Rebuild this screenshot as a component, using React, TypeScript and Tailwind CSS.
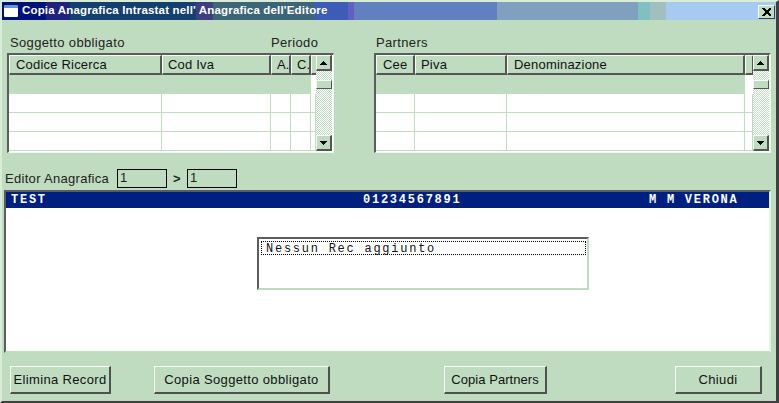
import React from "react";

const sans = "font-['Liberation_Sans',Arial,sans-serif]";
const mono = "font-['Liberation_Mono','Courier_New',monospace]";

const bands: [string, string][] = [
  ["w-[44px]", "bg-[#00107a]"],
  ["w-[24px]", "bg-[#20207e]"],
  ["w-[126px]", "bg-[#14406f]"],
  ["w-[17px]", "bg-[#3c3f80]"],
  ["w-[101px]", "bg-[#3c6678]"],
  ["w-[34px]", "bg-[#3c5cb8]"],
  ["w-[6px]", "bg-[#6060c0]"],
  ["w-[143px]", "bg-[#6080c0]"],
  ["w-[141px]", "bg-[#80a0c0]"],
  ["w-[12px]", "bg-[#80c0c0]"],
  ["w-[16px]", "bg-[#a0c0c0]"],
  ["flex-1", "bg-[#a6caf0]"],
];

function Triangle({ down }: { down?: boolean }) {
  return (
    <svg width="7" height="4" viewBox="0 0 7 4" shapeRendering="crispEdges">
      <path d={down ? "M0 0h7v1h-1v1h-1v1h-1v1h-1v-1h-1v-1h-1v-1h-1z" : "M3 0h1v1h1v1h1v1h1v1h-7v-1h1v-1h1v-1h1z"} fill="#000" />
    </svg>
  );
}

function ScrollButton({ down }: { down?: boolean }) {
  return (
    <div className="h-[16px] w-[16px] shrink-0 flex items-center justify-center bg-[#c0dcc0] border-t border-l border-t-[#f4faf4] border-l-[#f4faf4] border-r-2 border-b-2 border-r-[#555] border-b-[#555]">
      <Triangle down={down} />
    </div>
  );
}

function Scrollbar() {
  return (
    <div className="w-[16px] shrink-0 h-[96px] flex flex-col bg-[repeating-conic-gradient(#c0dcc0_0_25%,#ffffff_0_50%)] bg-[length:2px_2px]">
      <ScrollButton />
      <div className="mt-[9px] h-[9px] shrink-0 bg-[#c0dcc0] border-t border-l border-t-[#f4faf4] border-l-[#f4faf4] border-r border-b border-r-[#555] border-b-[#555]" />
      <div className="flex-1" />
      <ScrollButton down />
    </div>
  );
}

function HeaderCell({ w, label, pad = "pl-[6px]" }: { w: string; label: string; pad?: string }) {
  return (
    <div className={`${w} ${pad} shrink-0 h-[20px] box-border bg-[#c0dcc0] border-t border-l border-t-[#f4faf4] border-l-[#f4faf4] border-r-2 border-b-2 border-r-[#555] border-b-[#555] text-[13px] leading-[17px] tracking-[0.2px] text-[#111] overflow-hidden whitespace-nowrap`}>
      {label}
    </div>
  );
}

function Grid({
  outer,
  inner,
  cols,
  selW,
}: {
  outer: string;
  inner: string;
  cols: { w: string; cw: string; label: string; pad?: string }[];
  selW: string;
}) {
  return (
    <div className={`${outer} h-[100px] box-border flex border-t-2 border-l-2 border-t-[#5c5c5c] border-l-[#5c5c5c] border-r border-b border-r-[#f0f8f0] border-b-[#f0f8f0] bg-white`}>
      <div className={`${inner} shrink-0 flex flex-col`}>
        <div className="flex">
          {cols.map((c) => (
            <HeaderCell key={c.label + c.w} w={c.w} label={c.label} pad={c.pad} />
          ))}
        </div>
        <div className="h-[19px] flex bg-white">
          <div className={`${selW} bg-[#c0dcc0]`} />
        </div>
        {[0, 1, 2].map((r) => (
          <div key={r} className="flex h-[19px] border-t-0 border-b border-b-[#c0dcc0] box-border">
            {cols.map((c, i) => (
              <div key={i} className={`${c.cw} shrink-0 border-r border-r-[#c0dcc0] box-border`} />
            ))}
          </div>
        ))}
      </div>
      <Scrollbar />
    </div>
  );
}

function Btn({ w, ml, label, track = "tracking-[0.35px]" }: { w: string; ml: string; label: string; track?: string }) {
  return (
    <div className={`${w} ${ml} ${track} shrink-0 h-[28px] box-border flex items-center justify-center bg-[#c0dcc0] border-t border-l border-t-[#f8fcf8] border-l-[#f8fcf8] border-r-2 border-b-2 border-r-[#505050] border-b-[#505050] text-[13px] text-[#111] whitespace-nowrap`}>
      {label}
    </div>
  );
}

export default function App() {
  return (
    <div className={`${sans} w-[779px] h-[403px] box-border overflow-hidden flex flex-col bg-[#c0dcc0] border-t-2 border-l-2 border-t-[#d8ecd8] border-l-[#d8ecd8] border-r-3 border-b-2 border-r-[#404040] border-b-[#404040]`}>
      <div className="relative h-[18px] shrink-0 flex">
        {bands.map(([w, c], i) => (
          <div key={i} className={`${w} ${c}`} />
        ))}
        <div className="absolute left-0 top-0 h-[18px] flex items-center">
          <div className="ml-[2px] w-[14px] h-[12px] box-border bg-white border-t-[3px] border-t-[#5a9ad8] rounded-[1px]" />
          <span className="ml-[4px] text-[11.5px] font-bold tracking-[0.17px] text-white whitespace-nowrap">Copia Anagrafica Intrastat nell' Anagrafica dell'Editore</span>
        </div>
        <div className="absolute right-[1px] top-[3px] w-[17px] h-[14px] box-border flex items-center justify-center bg-[#c0dcc0] border-t border-l border-t-[#f4faf4] border-l-[#f4faf4] border-r border-b border-r-[#404040] border-b-[#404040]">
          <svg width="9" height="8" viewBox="0 0 9 8" shapeRendering="crispEdges">
            <path d="M0 0h2l2.500 2.500L7 0h2v1L6 4l3 3v1H7L4.500 5.500 2 8H0V7l3-3-3-3z" fill="#000" />
          </svg>
        </div>
      </div>

      <div className="h-[33px] shrink-0 flex items-end pb-[2px] text-[13px] leading-[16px] tracking-[0.35px] text-[#222]">
        <span className="ml-[8px] w-[261px]">Soggetto obbligato</span>
        <span className="w-[105px]">Periodo</span>
        <span>Partners</span>
      </div>

      <div className="shrink-0 flex">
        <Grid
          outer="ml-[5px] w-[327px]"
          inner="w-[307px]"
          selW="w-[302px]"
          cols={[
            { w: "w-[153px]", cw: "w-[153px]", label: "Codice Ricerca" },
            { w: "w-[109px]", cw: "w-[109px]", label: "Cod Iva", pad: "pl-[5px]" },
            { w: "w-[20px]", cw: "w-[20px]", label: "A.", pad: "pl-[5px]" },
            { w: "w-[20px]", cw: "w-[20px]", label: "C.", pad: "pl-[5px]" },
            { w: "w-[5px]", cw: "w-[5px]", label: "" },
          ]}
        />
        <Grid
          outer="ml-[40px] w-[397px] border-r-2"
          inner="w-[377px]"
          selW="w-[369px]"
          cols={[
            { w: "w-[39px]", cw: "w-[39px]", label: "Cee" },
            { w: "w-[92px]", cw: "w-[92px]", label: "Piva", pad: "pl-[5px]" },
            { w: "w-[238px]", cw: "w-[238px]", label: "Denominazione" },
            { w: "w-[8px]", cw: "w-[8px]", label: "" },
          ]}
        />
      </div>

      <div className="h-[37px] shrink-0 flex items-end pb-[2px] text-[13px] text-[#222]">
        <span className="ml-[3px] w-[112px] tracking-[0.3px] leading-[18px] h-[18px]">Editor Anagrafica</span>
        <div className="w-[50px] h-[19px] box-border border border-black pl-[2px] leading-[15px] text-[13px]">1</div>
        <span className="w-[20px] pl-[6px] font-bold text-[13px] leading-[17px] h-[18px]">&gt;</span>
        <div className="w-[50px] h-[19px] box-border border border-black pl-[2px] leading-[15px] text-[13px]">1</div>
      </div>

      <div className="ml-[2px] w-[767px] h-[163px] shrink-0 box-border bg-white border-t-2 border-l-2 border-t-[#5c5c5c] border-l-[#5c5c5c] border-r-2 border-b-2 border-r-[#e4f2e4] border-b-[#c0dcc0] flex flex-col">
        <div className={`${mono} h-[16px] shrink-0 flex bg-[#002080] text-white text-[12px] font-bold tracking-[1.75px] leading-[17px] whitespace-nowrap`}>
          <span className="ml-[5px] w-[352px]">TEST</span>
          <span className="w-[286px]">01234567891</span>
          <span>M M VERONA</span>
        </div>
        <div className="mt-[29px] ml-[251px] w-[332px] h-[53px] box-border border-t-2 border-l-2 border-t-[#5c5c5c] border-l-[#5c5c5c] border-r-2 border-b-2 border-r-[#c0dcc0] border-b-[#c0dcc0] pt-[2px] pl-[2px] pr-[1px]">
          <div className={`${mono} h-[14px] box-border border border-dotted border-black pl-[4px] text-[12px] tracking-[1.75px] leading-[14px] text-[#111] whitespace-nowrap`}>
            Nessun Rec aggiunto
          </div>
        </div>
      </div>

      <div className="flex mt-[13px]">
        <Btn w="w-[101px]" ml="ml-[8px]" label="Elimina Record" />
        <Btn w="w-[176px]" ml="ml-[43px]" label="Copia Soggetto obbligato" />
        <Btn w="w-[103px]" ml="ml-[114px]" label="Copia Partners" track="tracking-[0.05px]" />
        <Btn w="w-[87px]" ml="ml-[128px]" label="Chiudi" />
      </div>
    </div>
  );
}
